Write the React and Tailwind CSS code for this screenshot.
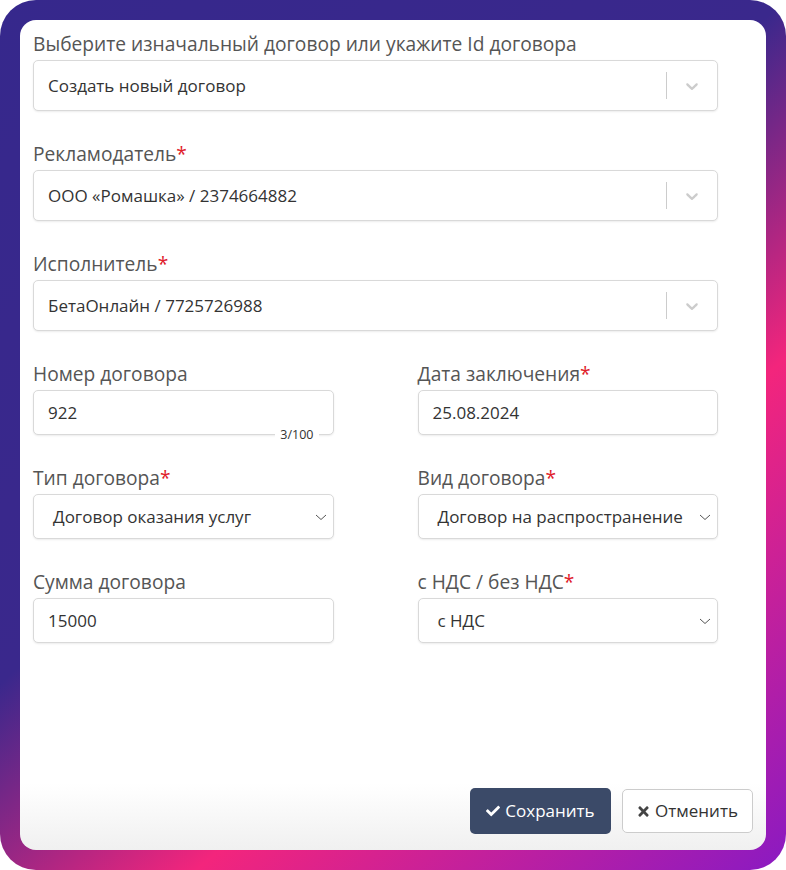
import { FaCheck, FaTimes } from "react-icons/fa";

// react-select style chevron + separator
function SelectIndicator() {
  return (
    <div className="flex items-center h-full">
      <span className="w-px h-[27px] bg-[#cccccc]" />
      <div className="w-[50px] flex items-center justify-center">
        <svg width="20" height="20" viewBox="0 0 20 20" fill="#cccccc">
          <path d="M4.516 7.548c0.436-0.446 1.043-0.481 1.576 0l3.908 3.747 3.908-3.747c0.533-0.481 1.141-0.446 1.574 0 0.436 0.445 0.408 1.197 0 1.615-0.406 0.418-4.695 4.502-4.695 4.502-0.217 0.223-0.502 0.335-0.787 0.335s-0.57-0.112-0.789-0.335c0 0-4.287-4.084-4.695-4.502s-0.436-1.17 0-1.615z" />
        </svg>
      </div>
    </div>
  );
}

function Label({ children, required }) {
  return (
    <div className="h-6 leading-6 mb-1 text-[19.2px] text-[#555555] whitespace-nowrap">
      {children}
      {required && <span className="text-[#e0202a]">*</span>}
    </div>
  );
}

function SearchSelect({ label, required, value }) {
  return (
    <div className="mb-[31px]">
      <Label required={required}>{label}</Label>
      <div className="h-[51px] flex items-center border border-[#d9d9d9] rounded-[5px] bg-white shadow-[0_1px_2px_rgba(0,0,0,0.08)]">
        <div className="flex-1 pl-[14px] text-[17px] text-[#333333]">{value}</div>
        <SelectIndicator />
      </div>
    </div>
  );
}

function NativeSelect({ label, required, value }) {
  return (
    <div className="mb-[31px]">
      <Label required={required}>{label}</Label>
      <div className="h-[45px] flex items-center justify-between border border-[#d9d9d9] rounded-[5px] bg-white shadow-[0_1px_2px_rgba(0,0,0,0.08)] pl-[19px] pr-[6px]">
        <span className="text-[17px] text-[#333333] whitespace-nowrap">{value}</span>
        <svg width="12" height="8" viewBox="0 0 12 8" fill="none" stroke="#555555" strokeWidth="1">
          <polyline points="1,2 6,6.5 11,2" />
        </svg>
      </div>
    </div>
  );
}

function TextInput({ label, required, value, counter }) {
  return (
    <div className="mb-[31px]">
      <Label required={required}>{label}</Label>
      <div className="relative h-[45px] flex items-center border border-[#d9d9d9] rounded-[5px] bg-white shadow-[0_1px_2px_rgba(0,0,0,0.08)] pl-[14px]">
        <span className="text-[17px] text-[#333333]">{value}</span>
        {counter && (
          <span className="absolute right-[14px] -bottom-[9px] bg-white px-[5px] text-[12.5px] leading-4 text-[#333333]">
            {counter}
          </span>
        )}
      </div>
    </div>
  );
}

export default function App() {
  return (
    <div className="w-[786px] h-[870px] bg-white" style={{ fontFamily: '"Open Sans", "Noto Sans", sans-serif' }}>
      <div className="w-full h-full rounded-[36px] p-5 bg-[linear-gradient(139deg,#36288c_0%,#3a288c_44%,#f3257c_67%,#8a1ac2_100%)]">
        <div className="h-full rounded-2xl flex flex-col bg-[linear-gradient(to_bottom,#ffffff_0%,#ffffff_92%,#f0f0f0_100%)]">

          <div className="pt-3 pl-[13px] w-[698px]">
            <SearchSelect
              label="Выберите изначальный договор или укажите Id договора"
              value="Создать новый договор"
            />
            <SearchSelect label="Рекламодатель" required value="ООО «Ромашка» / 2374664882" />
            <SearchSelect label="Исполнитель" required value="БетаОнлайн / 7725726988" />

            <div className="grid grid-cols-2 gap-x-[84px]">
              <TextInput label="Номер договора" value="922" counter="3/100" />
              <TextInput label="Дата заключения" required value="25.08.2024" />
              <NativeSelect label="Тип договора" required value="Договор оказания услуг" />
              <NativeSelect label="Вид договора" required value="Договор на распространение" />
              <TextInput label="Сумма договора" value="15000" />
              <NativeSelect label="с НДС / без НДС" required value="с НДС" />
            </div>
          </div>

          <div className="mt-auto flex justify-end items-center gap-[11px] pr-[13px] pb-4">
            <button className="w-[141px] h-[46px] flex items-center justify-center gap-[5px] rounded-[5px] bg-[#3b4a68] text-white text-[17px]">
              <FaCheck className="w-[14px] h-[14px]" />
              Сохранить
            </button>
            <button className="w-[131px] h-[44px] flex items-center justify-center gap-[5px] rounded-[5px] border border-[#cccccc] bg-white text-[#333333] text-[17px]">
              <FaTimes className="w-[13px] h-[15px] text-[#444444]" />
              Отменить
            </button>
          </div>

        </div>
      </div>
    </div>
  );
}
